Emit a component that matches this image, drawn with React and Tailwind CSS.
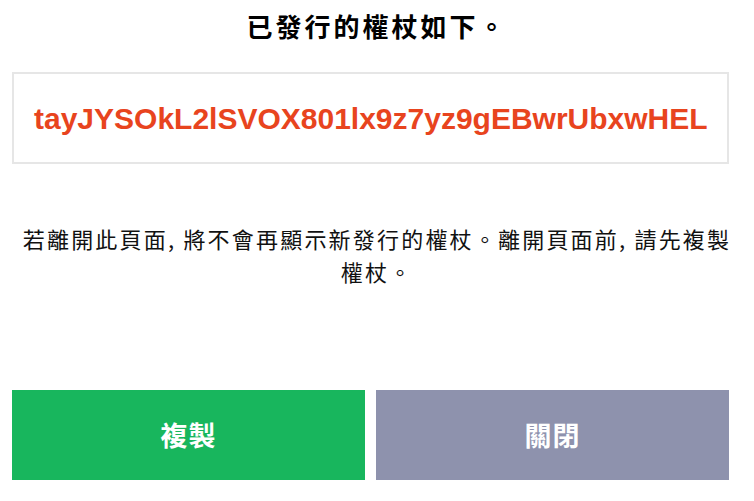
export default function App() {
  const token = 'tayJYSOkL2lSVOX801lx9z7yz9gEBwrUbxwHEL';
  return (
    <div
      className="w-[754px] h-[501px] bg-white overflow-hidden"
      style={{ fontFamily: '"Noto Sans CJK TC", "Noto Sans", sans-serif' }}
    >
      {/* Title */}
      <h1 className="pt-[11px] text-center text-[26px] leading-[30px] font-bold tracking-[3px] text-black">
        已發行的權杖如下。
      </h1>

      {/* Token box */}
      <div className="mt-[31px] ml-[12px] w-[717px] h-[92px] border-2 border-[#e6e6e6] px-[20px] flex items-center">
        <div
          className="whitespace-nowrap text-[30px] font-bold text-[#e8441e]"
          style={{ fontFamily: '"Liberation Sans", Arial, sans-serif' }}
        >
          {token}
        </div>
      </div>

      {/* Notice */}
      <p className="mt-[58px] px-[18px] text-center text-[22px] leading-[33px] tracking-[2.2px] text-[#111]">
        若離開此頁面, 將不會再顯示新發行的權杖。離開頁面前, 請先複製權杖。
      </p>

      {/* Actions */}
      <div className="mt-[102px] ml-[12px] w-[717px] grid grid-cols-2 gap-[11px]">
        <button className="h-[90px] bg-[#18b65d] text-white text-[27px] font-bold tracking-[1px]">
          複製
        </button>
        <button className="h-[90px] bg-[#8e92ad] text-white text-[27px] font-bold tracking-[1px]">
          關閉
        </button>
      </div>
    </div>
  );
}
